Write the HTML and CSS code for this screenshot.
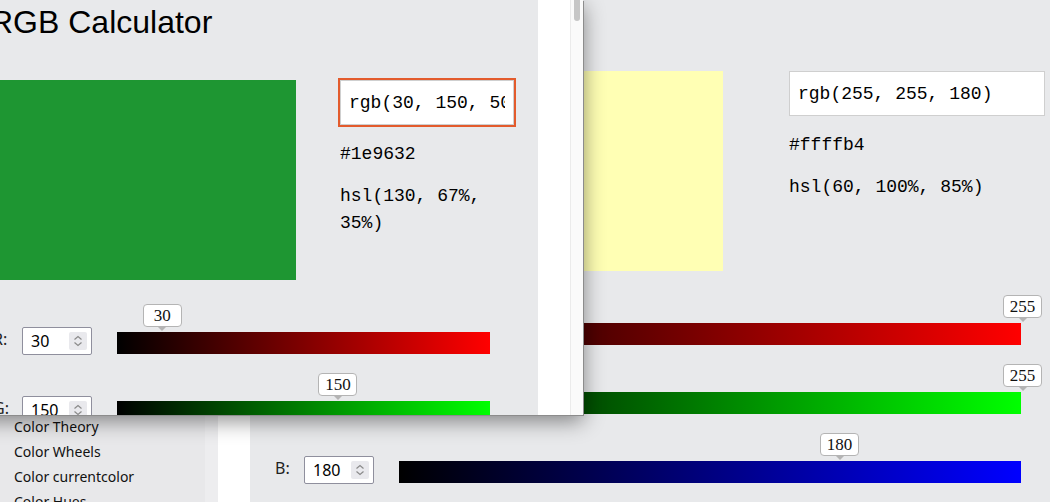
FILE: index.html
```html
<!DOCTYPE html>
<html lang="en">
<head>
<meta charset="utf-8">
<title>RGB Calculator</title>
<link rel="stylesheet" href="styles.css">
</head>
<body>
<div class="page">
  <aside class="sidebar">
    <nav class="nav">
      <a href="#">Color Theory</a>
      <a href="#">Color Wheels</a>
      <a href="#">Color currentcolor</a>
      <a href="#">Color Hues</a>
    </nav>
  </aside>
  <div class="sidebar-edge"></div>
  <div class="gutter"></div>
  <main class="main">
    <section class="calc calc-bg">
      <div class="calc-top">
        <div class="swatch" style="background:#ffffb4"></div>
        <div class="values">
          <input class="code-field" type="text" value="rgb(255, 255, 180)">
          <p class="code">#ffffb4</p>
          <p class="code">hsl(60, 100%, 85%)</p>
        </div>
      </div>
      <div class="sliders">
        <div class="row">
          <span class="ch">R:</span>
          <div class="num"><span>255</span><span class="spin"><svg width="18" height="18" viewBox="0 0 18 18"><path d="M5.5 7.5 9 4.5l3.5 3M5.5 10.5 9 13.5l3.5-3" fill="none" stroke="#8a8a8a" stroke-width="1.2"/></svg></span></div>
          <div class="track track-r"><span class="tip" style="left:100%">255</span></div>
        </div>
        <div class="row">
          <span class="ch">G:</span>
          <div class="num"><span>255</span><span class="spin"><svg width="18" height="18" viewBox="0 0 18 18"><path d="M5.5 7.5 9 4.5l3.5 3M5.5 10.5 9 13.5l3.5-3" fill="none" stroke="#8a8a8a" stroke-width="1.2"/></svg></span></div>
          <div class="track track-g"><span class="tip" style="left:100%">255</span></div>
        </div>
        <div class="row">
          <span class="ch">B:</span>
          <div class="num"><span>180</span><span class="spin"><svg width="18" height="18" viewBox="0 0 18 18"><path d="M5.5 7.5 9 4.5l3.5 3M5.5 10.5 9 13.5l3.5-3" fill="none" stroke="#8a8a8a" stroke-width="1.2"/></svg></span></div>
          <div class="track track-b"><span class="tip" style="left:70.59%">180</span></div>
        </div>
      </div>
    </section>
  </main>
</div>

<div class="popup">
  <div class="popup-body calc calc-pop">
    <h1 class="title">RGB Calculator</h1>
    <div class="calc-top">
      <div class="swatch" style="background:#1e9632"></div>
      <div class="values">
        <input class="code-field is-focused" type="text" value="rgb(30, 150, 50)">
        <p class="code">#1e9632</p>
        <p class="code">hsl(130, 67%, 35%)</p>
      </div>
    </div>
    <div class="sliders">
      <div class="row">
        <span class="ch">R:</span>
        <div class="num"><span>30</span><span class="spin"><svg width="18" height="18" viewBox="0 0 18 18"><path d="M5.5 7.5 9 4.5l3.5 3M5.5 10.5 9 13.5l3.5-3" fill="none" stroke="#8a8a8a" stroke-width="1.2"/></svg></span></div>
        <div class="track track-r"><span class="tip" style="left:11.76%">30</span></div>
      </div>
      <div class="row">
        <span class="ch">G:</span>
        <div class="num"><span>150</span><span class="spin"><svg width="18" height="18" viewBox="0 0 18 18"><path d="M5.5 7.5 9 4.5l3.5 3M5.5 10.5 9 13.5l3.5-3" fill="none" stroke="#8a8a8a" stroke-width="1.2"/></svg></span></div>
        <div class="track track-g"><span class="tip" style="left:58.82%">150</span></div>
      </div>
    </div>
  </div>
  <div class="popup-gap"></div>
  <div class="popup-scroll"><span class="thumb"></span></div>
</div>
</body>
</html>
```

FILE: styles.css
```css
html, body {
  margin: 0;
  padding: 0;
}

body {
  font-family: "Noto Sans", "Open Sans", sans-serif;
  color: #000;
  overflow: hidden;
}

.page {
  display: flex;
  height: 502px;
  overflow: hidden;
}

/* sidebar */
.sidebar {
  width: 205px;
  flex: none;
  background: #e8e8ea;
}

.nav {
  display: flex;
  flex-direction: column;
  padding: 414px 0 0 14px;
}

.nav a {
  font-size: 14px;
  line-height: 25px;
  color: #111;
  text-decoration: none;
  white-space: nowrap;
}

.sidebar-edge {
  width: 13px;
  flex: none;
  background: #ededef;
}

.gutter {
  width: 32px;
  flex: none;
  background: #fff;
}

.main {
  flex: 1;
  background: #e8e9eb;
  padding: 71px 5px 0 25px;
}

/* calculator */
.calc-top {
  display: flex;
  align-items: flex-start;
}

.calc-bg .calc-top {
  justify-content: flex-end;
  gap: 66px;
}

.calc-bg .swatch {
  width: 200px;
  height: 200px;
  flex: none;
}

.values {
  width: 256px;
  flex: none;
}

.calc-pop .calc-top {
  gap: 44px;
  margin-top: 38px;
}

.calc-pop .swatch {
  flex: 1;
  height: 200px;
}

.calc-pop .values {
  width: 174px;
}

.code-field {
  display: block;
  width: 100%;
  height: 45px;
  box-sizing: border-box;
  margin: 0;
  padding: 8px;
  border: 1px solid #cfcfcf;
  border-radius: 0;
  background: #fff;
  font: 18px/27px "Liberation Mono", monospace;
  color: #000;
}

.code-field.is-focused {
  outline: 2px solid #e35b2c;
}

.code {
  margin: 16px 0 0;
  font: 18px/27px "Liberation Mono", monospace;
  color: #000;
}

.code + .code {
  margin-top: 15px;
}

.sliders {
  margin-top: 47px;
  display: flex;
  flex-direction: column;
  gap: 41px;
  padding-right: 24px;
}

.row {
  display: flex;
  align-items: flex-start;
  height: 28px;
}

.ch {
  width: 29px;
  flex: none;
  font-size: 16px;
  line-height: 25px;
  color: #222;
}

.num {
  width: 70px;
  height: 28px;
  flex: none;
  box-sizing: border-box;
  display: flex;
  align-items: center;
  justify-content: space-between;
  padding: 0 4px 0 8px;
  border: 1px solid #8f8f9d;
  border-radius: 2px;
  background: #fff;
  font-size: 16px;
  color: #000;
}

.spin {
  width: 18px;
  height: 18px;
  display: flex;
  background: #e9e9ed;
  border-radius: 2px;
}

.track {
  flex: 1;
  height: 22px;
  margin: 5px 0 0 25px;
  position: relative;
}

.track-r { background: linear-gradient(to right, #000, #f00); }
.track-g { background: linear-gradient(to right, #000, #0f0); }
.track-b { background: linear-gradient(to right, #000, #00f); }

.tip {
  position: absolute;
  bottom: calc(100% + 5px);
  width: 39px;
  height: 23px;
  box-sizing: border-box;
  transform: translateX(calc(-50% + 1.5px));
  background: #fff;
  border: 1px solid #b4b4b4;
  border-radius: 4px;
  font: 17px/21px "Liberation Serif", serif;
  text-align: center;
  color: #111;
}

.tip::after {
  content: "";
  position: absolute;
  top: 100%;
  left: 50%;
  margin-left: -5px;
  border-left: 5px solid transparent;
  border-right: 5px solid transparent;
  border-top: 5px solid #b4b4b4;
}

/* popup window */
.popup {
  position: absolute;
  left: -40px;
  top: 0;
  width: 623px;
  height: 415px;
  display: flex;
  overflow: hidden;
  box-shadow: 1px 1px 0 #8c8c8c, 0 6px 20px rgba(0, 0, 0, 0.45);
}

.popup-body {
  width: 578px;
  flex: none;
  box-sizing: border-box;
  background: #e8e9eb;
  padding: 2px 24px 0 33px;
}

.title {
  margin: 0 0 0 -3px;
  font: normal 32px/40px "Liberation Sans", Arial, sans-serif;
  color: #000;
  white-space: nowrap;
}

.popup-gap {
  width: 32px;
  flex: none;
  background: #fff;
}

.popup-scroll {
  flex: 1;
  background: #fafafa;
  border-left: 1px solid #ebebeb;
}

.thumb {
  display: block;
  margin-left: 3px;
  width: 6px;
  height: 21px;
  background: #c6c6c6;
  border-radius: 0 0 3px 3px;
}
```
